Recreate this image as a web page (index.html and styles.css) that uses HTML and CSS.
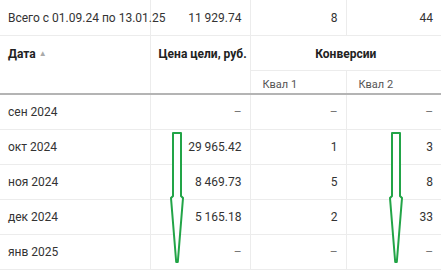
FILE: index.html
```html
<!DOCTYPE html>
<html lang="ru">
<head>
<meta charset="utf-8">
<link rel="stylesheet" href="styles.css">
</head>
<body>
<div class="wrap">
<table class="report">
  <colgroup>
    <col class="c-date"><col class="c-price"><col class="c-k1"><col class="c-k2">
  </colgroup>
  <tbody class="summary">
    <tr><td class="txt">Всего с 01.09.24 по 13.01.25</td><td class="num">11 929.74</td><td class="num">8</td><td class="num">44</td></tr>
  </tbody>
  <tbody class="head">
    <tr class="h1">
      <th rowspan="2" class="h-date">Дата <span class="sort">▲</span></th>
      <th rowspan="2" class="h-price">Цена цели, руб.</th>
      <th colspan="2" class="h-conv">Конверсии</th>
    </tr>
    <tr class="h2">
      <th class="sub">Квал 1</th>
      <th class="sub">Квал 2</th>
    </tr>
  </tbody>
  <tbody class="data">
    <tr><td class="txt">сен 2024</td><td class="num dash">–</td><td class="num dash">–</td><td class="num dash">–</td></tr>
    <tr><td class="txt">окт 2024</td><td class="num">29 965.42</td><td class="num">1</td><td class="num">3</td></tr>
    <tr><td class="txt">ноя 2024</td><td class="num">8 469.73</td><td class="num">5</td><td class="num">8</td></tr>
    <tr><td class="txt">дек 2024</td><td class="num">5 165.18</td><td class="num">2</td><td class="num">33</td></tr>
    <tr><td class="txt">янв 2025</td><td class="num dash">–</td><td class="num dash">–</td><td class="num dash">–</td></tr>
  </tbody>
</table>
<svg class="arrow arrow-a" width="18" height="134" viewBox="0 0 18 134">
  <path d="M5 1 H13 V64 L15 66 L9.8 130 L8.2 130 L3 66 L5 64 Z" fill="#fff" stroke="#22a447" stroke-width="2" stroke-linejoin="round"/>
</svg>
<svg class="arrow arrow-b" width="18" height="134" viewBox="0 0 18 134">
  <path d="M5 1 H13 V64 L15 66 L9.8 130 L8.2 130 L3 66 L5 64 Z" fill="#fff" stroke="#22a447" stroke-width="2" stroke-linejoin="round"/>
</svg>
</div>
</body>
</html>
```
FILE: styles.css
```css
html, body {
  margin: 0;
  padding: 0;
  background: #fff;
}
.wrap {
  position: relative;
  width: 441px;
  height: 273px;
  overflow: hidden;
}
.report {
  border-collapse: collapse;
  table-layout: fixed;
  width: 441px;
  font-family: Roboto, "Noto Sans", sans-serif;
  font-size: 12px;
  color: #333;
  white-space: nowrap;
}
.c-date { width: 150px; }
.c-price { width: 100px; }
.c-k1 { width: 96px; }
.c-k2 { width: 95px; }
.report td, .report th {
  border: 1px solid #ececec;
  padding: 0 8px;
}
.report tr > :first-child { border-left: none; }
.report tr > :last-child { border-right: none; }
.summary td {
  height: 35px;
  border-top: none;
}
.txt { text-align: left; }
.num { text-align: right; }
.dash { color: #777; }
.report th {
  font-weight: 700;
  color: #222;
  vertical-align: top;
}
.h1 th { height: 35px; padding-top: 11px; box-sizing: border-box; }
.h-date { text-align: left; padding-left: 15px; }
.h-price { text-align: right; }
.h-conv { text-align: center; }
.sort { color: #aaa; font-size: 8px; vertical-align: 2px; }
.h2 th.sub {
  height: 23px;
  font-weight: 400;
  font-size: 11px;
  color: #555;
  text-align: left;
  padding: 7px 12px 0;
  vertical-align: top;
  box-sizing: border-box;
}
.head tr.h2 th, .head th[rowspan] {
  border-bottom: 2px solid #b4b4b4;
}
.data td { height: 34px; }
.arrow {
  position: absolute;
}
.arrow-a { left: 168px; top: 132px; }
.arrow-b { left: 387px; top: 132px; }
```
